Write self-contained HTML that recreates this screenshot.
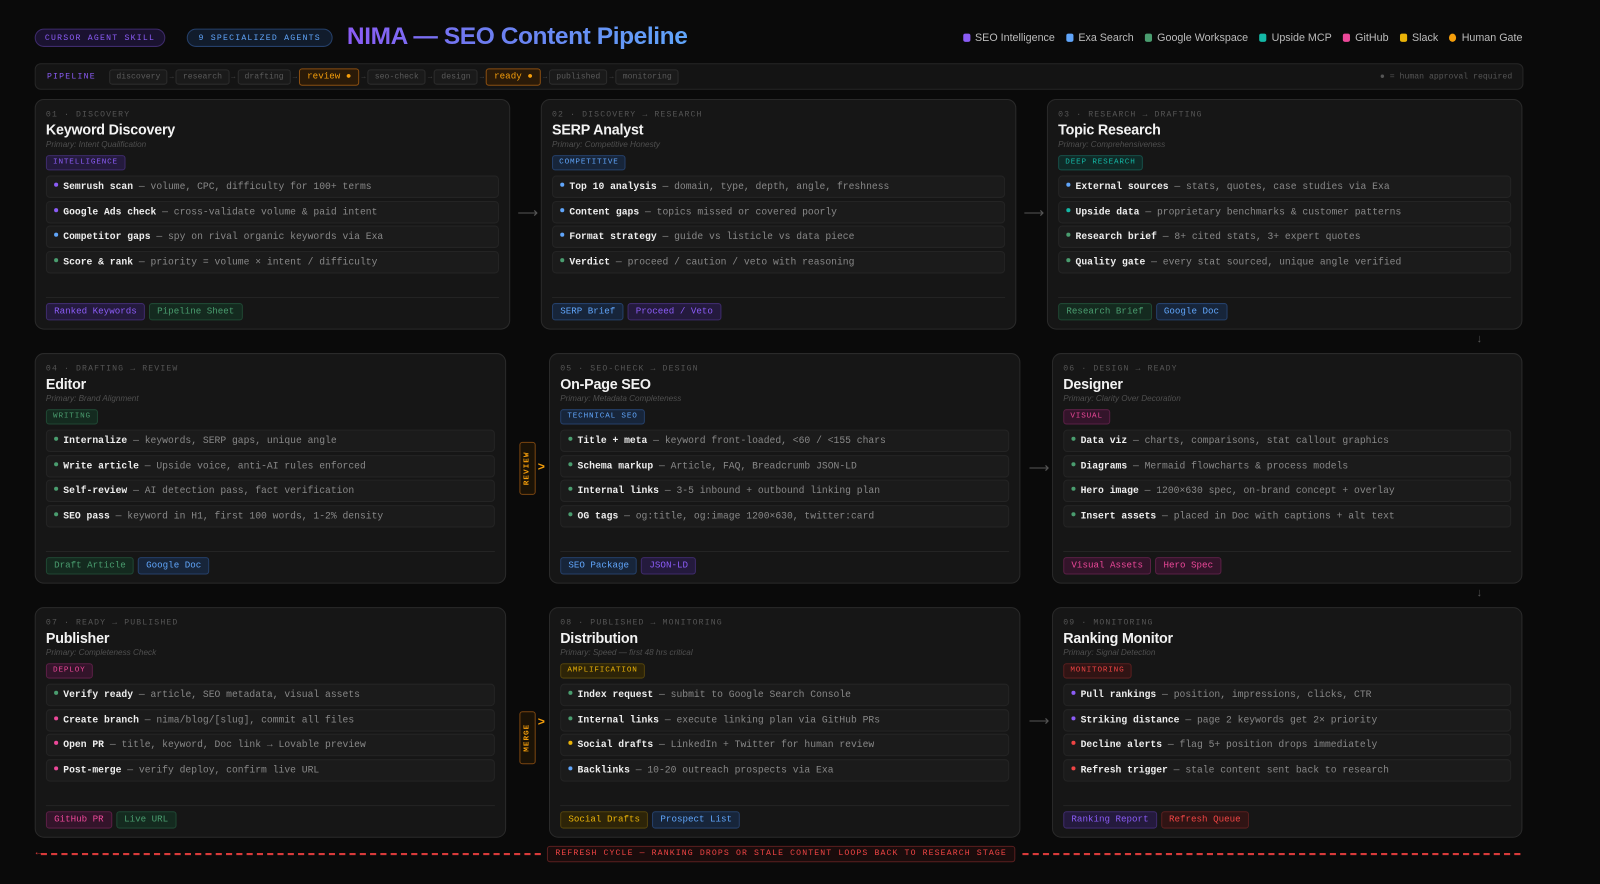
<!DOCTYPE html>
<html><head><meta charset="utf-8"><style>
*{box-sizing:border-box;margin:0;padding:0}
body{width:1600px;height:883px;background:#0a0a0a;font-family:"Liberation Sans",sans-serif;color:#ddd;position:relative;overflow:hidden}
#w{position:absolute;left:0;top:0;width:1568px;height:866px;transform:scale(1.0204);transform-origin:0 0}
.mono{font-family:"Liberation Mono",monospace}
.pill{position:absolute;top:28px;height:18px;border-radius:9px;font-family:"Liberation Mono",monospace;font-size:8px;letter-spacing:1.2px;line-height:17px;text-align:center}
.title{position:absolute;left:340px;top:22px;font-size:24px;font-weight:bold;letter-spacing:-0.4px;background:linear-gradient(90deg,#8b5cf6,#6d7cf0 40%,#60a5fa);-webkit-background-clip:text;color:transparent}
.legend{position:absolute;top:31px;right:76px;font-size:10.5px;color:#bbb;display:flex;gap:11px}
.legend span i{display:inline-block;width:7px;height:8px;border-radius:2px;margin-right:5px;vertical-align:-1px}
.pipe{position:absolute;left:34px;top:62px;width:1459px;height:26px;background:#141414;border:1px solid #262626;border-radius:6px}
.pipe .lbl{position:absolute;left:11px;top:8px;font-size:8px;letter-spacing:1.2px;color:#8b5cf6;font-family:"Liberation Mono",monospace}
.stages{position:absolute;left:72px;top:4px;display:flex;align-items:center;font-family:"Liberation Mono",monospace;font-size:8px;color:#555}
.st{height:15px;line-height:13px;padding:0 6px;border:1px solid #2c2c2c;background:#1a1a1a;border-radius:3px;color:#5a5a5a}
.st.o{border-color:#8a4e10;background:#2a1a08;color:#f59e0b}
.ar{width:8px;text-align:center;color:#444;font-size:7px}
.note{position:absolute;right:10px;top:8px;font-size:8px;color:#555;font-family:"Liberation Mono",monospace}
.card{position:absolute;height:226px;background:#161616;border:1px solid #2a2a2a;border-radius:9px}
.card .l{position:absolute;left:10px;top:10px;font-family:"Liberation Mono",monospace;font-size:8px;letter-spacing:1.1px;color:#555}
.card .t{position:absolute;left:10px;top:21px;font-size:14px;font-weight:bold;color:#f2f2f2;letter-spacing:-0.2px}
.card .p{position:absolute;left:10px;top:39px;font-size:8px;font-style:italic;color:#4f4f4f}
.tag{position:absolute;left:10px;top:54px;height:15px;line-height:13px;padding:0 6px;border-radius:3px;font-family:"Liberation Mono",monospace;font-size:7.5px;letter-spacing:0.8px;border:1px solid}
.items{position:absolute;left:10px;right:10px;top:74px}
.it{height:22px;margin-bottom:2.7px;background:#1b1b1b;border:1px solid #242424;border-radius:4px;font-family:"Liberation Mono",monospace;font-size:9.5px;line-height:20px;padding-left:7px;color:#888;white-space:nowrap;overflow:hidden}
.it b{color:#eee}
.it i{display:inline-block;width:4px;height:4px;border-radius:50%;margin-right:5px;vertical-align:2px}
.div{position:absolute;left:10px;right:10px;top:193px;border-top:1px solid #242424}
.outs{position:absolute;left:10px;top:199px;display:flex;gap:4px}
.o{height:17px;line-height:15px;padding:0 7px;border-radius:3px;border:1px solid;font-family:"Liberation Mono",monospace;font-size:9px}
.pu{color:#8b5cf6;background:#241a3d;border-color:#3e2b6b}
.bl{color:#60a5fa;background:#17253a;border-color:#25406a}
.gr{color:#4a9d6f;background:#142a1f;border-color:#1f4733}
.te{color:#14b8a6;background:#0f2a27;border-color:#165049}
.pk{color:#ec4899;background:#33142a;border-color:#5a1f45}
.ye{color:#eab308;background:#2d2408;border-color:#54430c}
.re{color:#ef4444;background:#301414;border-color:#5a1f1f}
.arrow{position:absolute;color:#555;font-size:14px}
.gate{position:absolute;left:509px;width:16px;height:52px;border:1px solid #7a4510;border-radius:3px;background:#1a1206}
.gate span{position:absolute;left:50%;top:50%;transform:translate(-50%,-50%) rotate(-90deg);font-family:"Liberation Mono",monospace;font-size:7.5px;letter-spacing:1px;color:#f59e0b;font-weight:bold}
.chev{position:absolute;left:527px;color:#f59e0b;font-size:12px;font-weight:bold}
.dash{position:absolute;top:836px;border-top:2px dashed #d83a3a;height:0}
.refresh{position:absolute;left:536px;top:829px;width:459px;height:16px;border:1px solid #5a1f1f;border-radius:3px;background:#1a0c0c;color:#ef4444;font-family:"Liberation Mono",monospace;font-size:8px;letter-spacing:1.1px;text-align:center;line-height:14px}
</style></head><body><div id="w">

<div class="pill" style="left:34px;width:128px;background:#1a1230;border:1px solid #3e2b6b;color:#8b5cf6">CURSOR AGENT SKILL</div>
<div class="pill" style="left:183px;width:143px;background:#111c2c;border:1px solid #25406a;color:#60a5fa">9 SPECIALIZED AGENTS</div>
<div class="title">NIMA — SEO Content Pipeline</div>
<div class="legend">
<span><i style="background:#8b5cf6"></i>SEO Intelligence</span>
<span><i style="background:#60a5fa"></i>Exa Search</span>
<span><i style="background:#4a9d6f"></i>Google Workspace</span>
<span><i style="background:#14b8a6"></i>Upside MCP</span>
<span><i style="background:#ec4899"></i>GitHub</span>
<span><i style="background:#eab308"></i>Slack</span>
<span><i style="background:#f59e0b;border-radius:50%"></i>Human Gate</span>
</div>

<div class="pipe">
<div class="lbl">PIPELINE</div>
<div class="stages">
<div class="st">discovery</div><div class="ar">→</div>
<div class="st">research</div><div class="ar">→</div>
<div class="st">drafting</div><div class="ar">→</div>
<div class="st o">review ●</div><div class="ar">→</div>
<div class="st">seo-check</div><div class="ar">→</div>
<div class="st">design</div><div class="ar">→</div>
<div class="st o">ready ●</div><div class="ar">→</div>
<div class="st">published</div><div class="ar">→</div>
<div class="st">monitoring</div>
</div>
<div class="note">● = human approval required</div>
</div>

<!-- Row 1 -->
<div class="card" style="left:34px;top:97px;width:466px">
<div class="l">01 · DISCOVERY</div><div class="t">Keyword Discovery</div><div class="p">Primary: Intent Qualification</div>
<div class="tag pu">INTELLIGENCE</div>
<div class="items">
<div class="it"><i style="background:#8b5cf6"></i><b>Semrush scan</b> — volume, CPC, difficulty for 100+ terms</div>
<div class="it"><i style="background:#8b5cf6"></i><b>Google Ads check</b> — cross-validate volume &amp; paid intent</div>
<div class="it"><i style="background:#60a5fa"></i><b>Competitor gaps</b> — spy on rival organic keywords via Exa</div>
<div class="it"><i style="background:#4a9d6f"></i><b>Score &amp; rank</b> — priority = volume × intent / difficulty</div>
</div><div class="div"></div>
<div class="outs"><div class="o pu">Ranked Keywords</div><div class="o gr">Pipeline Sheet</div></div>
</div>

<div class="card" style="left:530px;top:97px;width:466px">
<div class="l">02 · DISCOVERY → RESEARCH</div><div class="t">SERP Analyst</div><div class="p">Primary: Competitive Honesty</div>
<div class="tag bl">COMPETITIVE</div>
<div class="items">
<div class="it"><i style="background:#60a5fa"></i><b>Top 10 analysis</b> — domain, type, depth, angle, freshness</div>
<div class="it"><i style="background:#60a5fa"></i><b>Content gaps</b> — topics missed or covered poorly</div>
<div class="it"><i style="background:#60a5fa"></i><b>Format strategy</b> — guide vs listicle vs data piece</div>
<div class="it"><i style="background:#4a9d6f"></i><b>Verdict</b> — proceed / caution / veto with reasoning</div>
</div><div class="div"></div>
<div class="outs"><div class="o bl">SERP Brief</div><div class="o pu">Proceed / Veto</div></div>
</div>

<div class="card" style="left:1026px;top:97px;width:466px">
<div class="l">03 · RESEARCH → DRAFTING</div><div class="t">Topic Research</div><div class="p">Primary: Comprehensiveness</div>
<div class="tag te">DEEP RESEARCH</div>
<div class="items">
<div class="it"><i style="background:#60a5fa"></i><b>External sources</b> — stats, quotes, case studies via Exa</div>
<div class="it"><i style="background:#14b8a6"></i><b>Upside data</b> — proprietary benchmarks &amp; customer patterns</div>
<div class="it"><i style="background:#4a9d6f"></i><b>Research brief</b> — 8+ cited stats, 3+ expert quotes</div>
<div class="it"><i style="background:#4a9d6f"></i><b>Quality gate</b> — every stat sourced, unique angle verified</div>
</div><div class="div"></div>
<div class="outs"><div class="o gr">Research Brief</div><div class="o bl">Google Doc</div></div>
</div>

<div class="arrow" style="left:507px;top:200px">⟶</div>
<div class="arrow" style="left:1003px;top:200px">⟶</div>
<div class="arrow" style="left:1447px;top:326px;font-size:11px">↓</div>

<!-- Row 2 -->
<div class="card" style="left:34px;top:346px;width:462px">
<div class="l">04 · DRAFTING → REVIEW</div><div class="t">Editor</div><div class="p">Primary: Brand Alignment</div>
<div class="tag gr">WRITING</div>
<div class="items">
<div class="it"><i style="background:#4a9d6f"></i><b>Internalize</b> — keywords, SERP gaps, unique angle</div>
<div class="it"><i style="background:#4a9d6f"></i><b>Write article</b> — Upside voice, anti-AI rules enforced</div>
<div class="it"><i style="background:#4a9d6f"></i><b>Self-review</b> — AI detection pass, fact verification</div>
<div class="it"><i style="background:#4a9d6f"></i><b>SEO pass</b> — keyword in H1, first 100 words, 1-2% density</div>
</div><div class="div"></div>
<div class="outs"><div class="o gr">Draft Article</div><div class="o bl">Google Doc</div></div>
</div>

<div class="card" style="left:538px;top:346px;width:462px">
<div class="l">05 · SEO-CHECK → DESIGN</div><div class="t">On-Page SEO</div><div class="p">Primary: Metadata Completeness</div>
<div class="tag bl">TECHNICAL SEO</div>
<div class="items">
<div class="it"><i style="background:#4a9d6f"></i><b>Title + meta</b> — keyword front-loaded, &lt;60 / &lt;155 chars</div>
<div class="it"><i style="background:#4a9d6f"></i><b>Schema markup</b> — Article, FAQ, Breadcrumb JSON-LD</div>
<div class="it"><i style="background:#4a9d6f"></i><b>Internal links</b> — 3-5 inbound + outbound linking plan</div>
<div class="it"><i style="background:#4a9d6f"></i><b>OG tags</b> — og:title, og:image 1200×630, twitter:card</div>
</div><div class="div"></div>
<div class="outs"><div class="o bl">SEO Package</div><div class="o pu">JSON-LD</div></div>
</div>

<div class="card" style="left:1031px;top:346px;width:461px">
<div class="l">06 · DESIGN → READY</div><div class="t">Designer</div><div class="p">Primary: Clarity Over Decoration</div>
<div class="tag pk">VISUAL</div>
<div class="items">
<div class="it"><i style="background:#4a9d6f"></i><b>Data viz</b> — charts, comparisons, stat callout graphics</div>
<div class="it"><i style="background:#4a9d6f"></i><b>Diagrams</b> — Mermaid flowcharts &amp; process models</div>
<div class="it"><i style="background:#4a9d6f"></i><b>Hero image</b> — 1200×630 spec, on-brand concept + overlay</div>
<div class="it"><i style="background:#4a9d6f"></i><b>Insert assets</b> — placed in Doc with captions + alt text</div>
</div><div class="div"></div>
<div class="outs"><div class="o pk">Visual Assets</div><div class="o pk">Hero Spec</div></div>
</div>

<div class="gate" style="top:433px"><span>REVIEW</span></div>
<div class="chev" style="top:450px">&gt;</div>
<div class="arrow" style="left:1008px;top:450px">⟶</div>
<div class="arrow" style="left:1447px;top:575px;font-size:11px">↓</div>

<!-- Row 3 -->
<div class="card" style="left:34px;top:595px;width:462px">
<div class="l">07 · READY → PUBLISHED</div><div class="t">Publisher</div><div class="p">Primary: Completeness Check</div>
<div class="tag pk">DEPLOY</div>
<div class="items">
<div class="it"><i style="background:#4a9d6f"></i><b>Verify ready</b> — article, SEO metadata, visual assets</div>
<div class="it"><i style="background:#ec4899"></i><b>Create branch</b> — nima/blog/[slug], commit all files</div>
<div class="it"><i style="background:#ec4899"></i><b>Open PR</b> — title, keyword, Doc link → Lovable preview</div>
<div class="it"><i style="background:#ec4899"></i><b>Post-merge</b> — verify deploy, confirm live URL</div>
</div><div class="div"></div>
<div class="outs"><div class="o pk">GitHub PR</div><div class="o gr">Live URL</div></div>
</div>

<div class="card" style="left:538px;top:595px;width:462px">
<div class="l">08 · PUBLISHED → MONITORING</div><div class="t">Distribution</div><div class="p">Primary: Speed — first 48 hrs critical</div>
<div class="tag ye">AMPLIFICATION</div>
<div class="items">
<div class="it"><i style="background:#4a9d6f"></i><b>Index request</b> — submit to Google Search Console</div>
<div class="it"><i style="background:#4a9d6f"></i><b>Internal links</b> — execute linking plan via GitHub PRs</div>
<div class="it"><i style="background:#eab308"></i><b>Social drafts</b> — LinkedIn + Twitter for human review</div>
<div class="it"><i style="background:#60a5fa"></i><b>Backlinks</b> — 10-20 outreach prospects via Exa</div>
</div><div class="div"></div>
<div class="outs"><div class="o ye">Social Drafts</div><div class="o bl">Prospect List</div></div>
</div>

<div class="card" style="left:1031px;top:595px;width:461px">
<div class="l">09 · MONITORING</div><div class="t">Ranking Monitor</div><div class="p">Primary: Signal Detection</div>
<div class="tag re">MONITORING</div>
<div class="items">
<div class="it"><i style="background:#8b5cf6"></i><b>Pull rankings</b> — position, impressions, clicks, CTR</div>
<div class="it"><i style="background:#8b5cf6"></i><b>Striking distance</b> — page 2 keywords get 2× priority</div>
<div class="it"><i style="background:#ef4444"></i><b>Decline alerts</b> — flag 5+ position drops immediately</div>
<div class="it"><i style="background:#ef4444"></i><b>Refresh trigger</b> — stale content sent back to research</div>
</div><div class="div"></div>
<div class="outs"><div class="o pu">Ranking Report</div><div class="o re">Refresh Queue</div></div>
</div>

<div class="gate" style="top:697px"><span>MERGE</span></div>
<div class="chev" style="top:700px">&gt;</div>
<div class="arrow" style="left:1008px;top:698px">⟶</div>

<div class="dash" style="left:40px;width:490px"></div>
<div style="position:absolute;left:33px;top:830px;color:#d83a3a;font-size:10px">←</div>
<div class="refresh">REFRESH CYCLE — RANKING DROPS OR STALE CONTENT LOOPS BACK TO RESEARCH STAGE</div>
<div class="dash" style="left:1002px;width:488px"></div>
</div></body></html>
